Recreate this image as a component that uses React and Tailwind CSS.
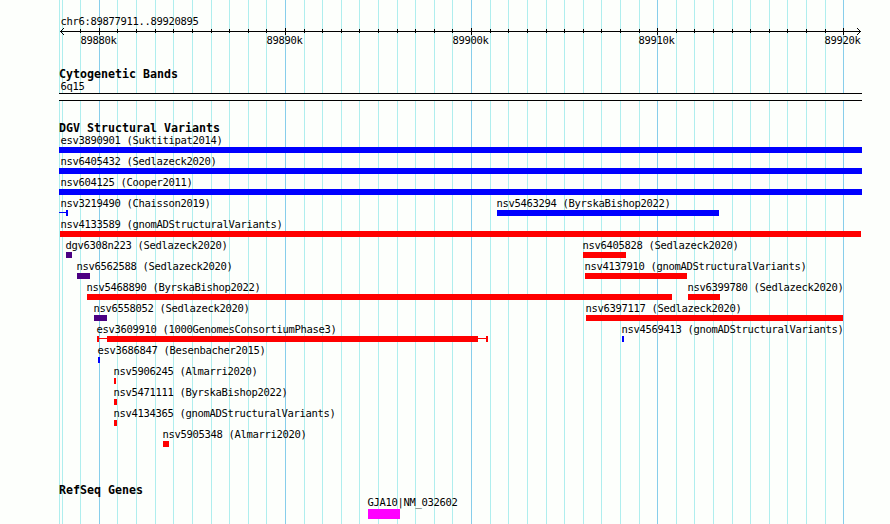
const FONT = "font-['DejaVu_Sans_Mono',monospace]"

const BLUE = 'bg-[#0000ff]'
const RED = 'bg-[#ff0000]'
const INDIGO = 'bg-[#4b0082]'

// x positions of the 1 kb grid, every tenth one is a major line
const minorLines = [
  59, 62, 80, 117, 136, 155, 173, 192, 211, 229, 248, 266,
  304, 322, 341, 359, 378, 397, 415, 434, 452,
  490, 508, 527, 546, 564, 583, 601, 620, 639,
  676, 694, 713, 732, 750, 769, 787, 806, 825,
]
const majorLines = [
  { x: 99,  label: '89880k' },
  { x: 285, label: '89890k' },
  { x: 471, label: '89900k' },
  { x: 657, label: '89910k' },
  { x: 843, label: '89920k' },
]

// bars: [x, width, color, thin?]
const rows = [
  [{ name: 'esv3890901 (Suktitipat2014)', at: 61, bars: [[59, 803, BLUE]] }],
  [{ name: 'nsv6405432 (Sedlazeck2020)', at: 61, bars: [[59, 803, BLUE]] }],
  [{ name: 'nsv604125 (Cooper2011)', at: 61, bars: [[59, 803, BLUE]] }],
  [
    { name: 'nsv3219490 (Chaisson2019)', at: 61, bars: [[59, 8, BLUE, true], [66, 2, BLUE]] },
    { name: 'nsv5463294 (ByrskaBishop2022)', at: 497, bars: [[497, 222, BLUE]] },
  ],
  [{ name: 'nsv4133589 (gnomADStructuralVariants)', at: 61, bars: [[60, 801, RED]] }],
  [
    { name: 'dgv6308n223 (Sedlazeck2020)', at: 66, bars: [[66, 6, INDIGO]] },
    { name: 'nsv6405828 (Sedlazeck2020)', at: 583, bars: [[583, 43, RED]] },
  ],
  [
    { name: 'nsv6562588 (Sedlazeck2020)', at: 77, bars: [[77, 13, INDIGO]] },
    { name: 'nsv4137910 (gnomADStructuralVariants)', at: 585, bars: [[585, 102, RED]] },
  ],
  [
    { name: 'nsv5468890 (ByrskaBishop2022)', at: 87, bars: [[87, 585, RED]] },
    { name: 'nsv6399780 (Sedlazeck2020)', at: 688, bars: [[688, 32, RED]] },
  ],
  [
    { name: 'nsv6558052 (Sedlazeck2020)', at: 94, bars: [[94, 13, INDIGO]] },
    { name: 'nsv6397117 (Sedlazeck2020)', at: 586, bars: [[586, 257, RED]] },
  ],
  [
    {
      name: 'esv3609910 (1000GenomesConsortiumPhase3)',
      at: 97,
      bars: [[97, 2, RED], [97, 391, RED, true], [107, 371, RED], [486, 2, RED]],
    },
    { name: 'nsv4569413 (gnomADStructuralVariants)', at: 622, bars: [[622, 2, BLUE]] },
  ],
  [{ name: 'esv3686847 (Besenbacher2015)', at: 98, bars: [[98, 2, BLUE]] }],
  [{ name: 'nsv5906245 (Almarri2020)', at: 114, bars: [[114, 2, RED]] }],
  [{ name: 'nsv5471111 (ByrskaBishop2022)', at: 114, bars: [[114, 3, RED]] }],
  [{ name: 'nsv4134365 (gnomADStructuralVariants)', at: 114, bars: [[114, 3, RED]] }],
  [{ name: 'nsv5905348 (Almarri2020)', at: 163, bars: [[163, 6, RED]] }],
]

function Label({ x, children }) {
  return (
    <span
      className="[grid-area:1/1] justify-self-start whitespace-pre text-[10.5px] leading-[13px] tracking-[-0.32px]"
      style={{ marginLeft: x - 0.5 }}
    >
      {children}
    </span>
  )
}

function Heading({ children }) {
  return <h2 className="ml-[59px] h-3 text-[11.63px] leading-3 font-bold">{children}</h2>
}

function FeatureRow({ features }) {
  return (
    <div className="h-[21px]">
      <div className="grid h-[13px]">
        {features.map(f => <Label key={f.name} x={f.at}>{f.name}</Label>)}
      </div>
      <div className="grid h-1.5">
        {features.flatMap(f => f.bars).map(([x, width, color, thin]) => (
          <div
            key={`${x}-${width}`}
            className={`[grid-area:1/1] ${thin ? 'mt-0.5 h-px' : 'h-1.5'} ${color}`}
            style={{ marginLeft: x, width }}
          />
        ))}
      </div>
    </div>
  )
}

function Grid() {
  return (
    <svg className="absolute inset-0" width="890" height="524" shapeRendering="crispEdges">
      {minorLines.map(x => <rect key={x} x={x} y="0" width="1" height="524" fill="#afeeee" />)}
      {majorLines.map(({ x }) => <rect key={x} x={x} y="0" width="1" height="524" fill="#87ceeb" />)}
    </svg>
  )
}

function Ruler() {
  return (
    <svg className="block h-[7px]" width="890" height="7" shapeRendering="crispEdges">
      <rect x="60" y="3" width="801" height="1" />
      {minorLines.slice(2).map(x => <rect key={x} x={x} y="1" width="1" height="4" />)}
      {majorLines.map(({ x }) => <rect key={x} x={x} y="0" width="1" height="7" />)}
      {[1, 2, 3].map(d => (
        <g key={d}>
          <rect x={60 + d} y={3 - d} width="1" height="1" />
          <rect x={60 + d} y={3 + d} width="1" height="1" />
          <rect x={860 - d} y={3 - d} width="1" height="1" />
          <rect x={860 - d} y={3 + d} width="1" height="1" />
        </g>
      ))}
    </svg>
  )
}

export default function App() {
  return (
    <div className={`relative h-[524px] w-[890px] overflow-hidden bg-[#fdfffc] text-black ${FONT}`}>
      <Grid />
      <main className="relative flex flex-col">
        {/* Scale */}
        <section className="h-[68px] pt-[15px]">
          <div className="grid h-[13px]">
            <Label x={61}>chr6:89877911..89920895</Label>
          </div>
          <Ruler />
          <div className="-mt-px grid h-[13px]">
            {majorLines.map(({ x, label }) => <Label key={x} x={x - 18}>{label}</Label>)}
          </div>
        </section>

        {/* Cytogenetic bands */}
        <section className="h-[54px]">
          <Heading>Cytogenetic Bands</Heading>
          <div className="grid h-[13px]">
            <Label x={61}>6q15</Label>
          </div>
          <div className="ml-[59px] h-2 w-[803px] border-y border-black bg-[#fdfffc]" />
        </section>

        {/* Structural variants */}
        <section className="h-[362px]">
          <Heading>DGV Structural Variants</Heading>
          {rows.map(features => <FeatureRow key={features[0].name} features={features} />)}
        </section>

        {/* Genes */}
        <section>
          <Heading>RefSeq Genes</Heading>
          <div className="grid h-[13px]">
            <Label x={368}>GJA10|NM_032602</Label>
          </div>
          <div className="ml-[368px] h-2.5 w-8 bg-[#ff00ff]" />
        </section>
      </main>
    </div>
  )
}
